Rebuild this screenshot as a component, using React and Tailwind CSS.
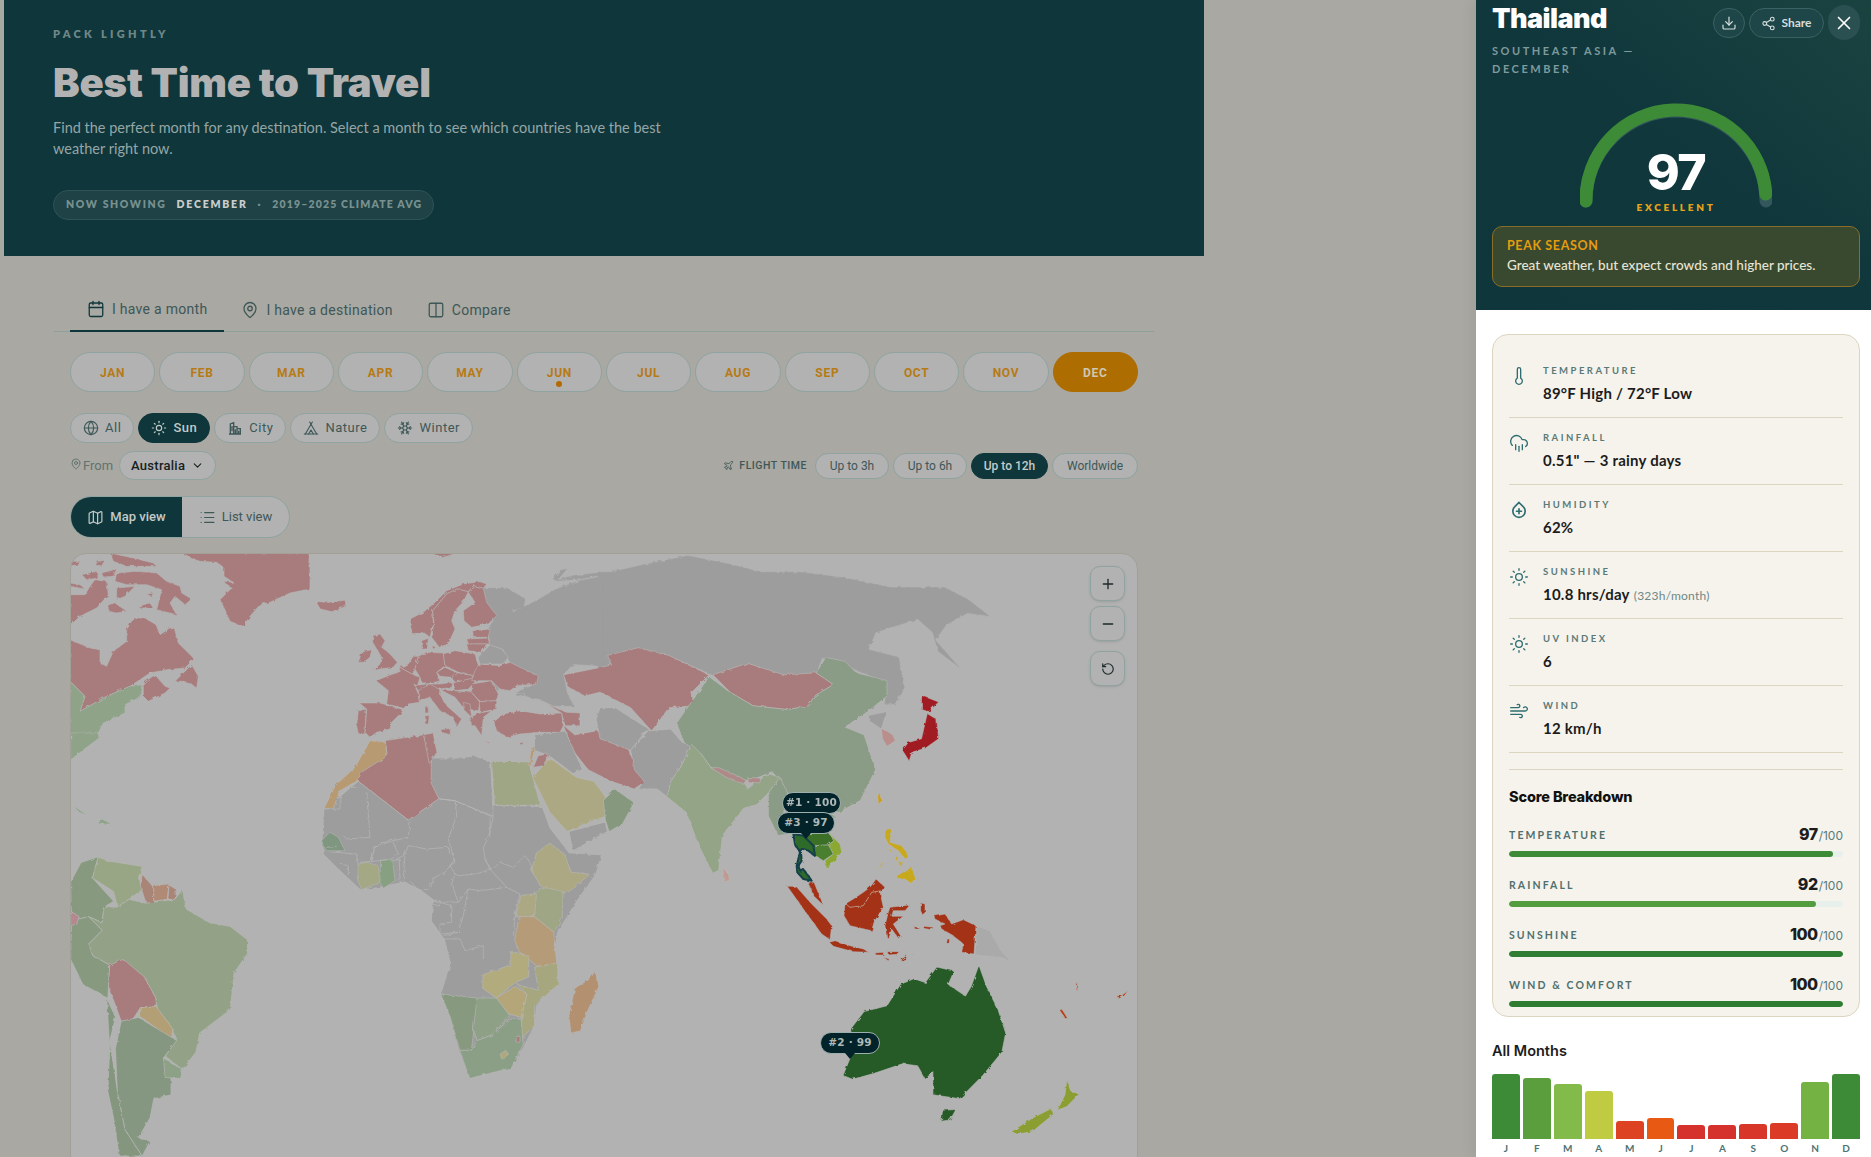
import React from "react";
import {
  Calendar,
  MapPin,
  Columns2,
  Globe,
  Sun,
  Tent,
  Snowflake,
  Map as MapIcon,
  List,
  ChevronDown,
  Plane,
  Download,
  Share2,
  X,
  Thermometer,
  CloudRain,
  Wind,
  Plus,
  Minus,
  RotateCcw,
} from "lucide-react";

const months = ["JAN", "FEB", "MAR", "APR", "MAY", "JUN", "JUL", "AUG", "SEP", "OCT", "NOV", "DEC"];

const CityIcon = ({ className }) => (
  <svg viewBox="0 0 24 24" fill="none" stroke="currentColor" strokeWidth="2" className={className}>
    <path d="M3 21h18M5 21V6l5-2v17M10 10h5v11M15 13h5v8M7.5 9v8M12.5 14v7M17.5 16v5" />
  </svg>
);

const HumidityIcon = ({ className }) => (
  <svg viewBox="0 0 24 24" fill="none" stroke="currentColor" strokeWidth="2" strokeLinecap="round" className={className}>
    <path d="M12 3l5 5a7.4 7.4 0 1 1-10 0z" />
    <path d="M12 10.5v6M9 13.5h6" />
  </svg>
);

const Pill = ({ icon: Icon, label, active }) => (
  <button
    className={`h-[30px] px-[12px] flex items-center gap-[6px] rounded-full border text-[13px] tracking-[0.04em] ${
      active
        ? "bg-[#0f363b] border-[#0f363b] text-[#c2cbc8] font-medium"
        : "bg-[#b2b2b2] border-[#8fa3a0] text-[#3e5757]"
    }`}
  >
    <Icon className="w-[16px] h-[16px]" strokeWidth={1.7} />
    {label}
  </button>
);

const land = "#9d9d9d";
const pink = "#a87c7c";
const indo = "#a33016";
const phil = "#c8a91e";

// traced from the 3x crop at (70,554)
const canadaShapes = [
  [pink, "345,0 720,0 720,108 660,120 600,148 570,155 540,190 520,220 480,205 465,170 450,140 485,105 458,85 490,88 462,70 462,45 440,28 390,25 340,5"],
  [pink, "140,60 200,55 260,60 290,85 330,100 335,120 365,138 345,155 315,130 300,150 320,185 260,170 275,110 230,95 170,95 135,85"],
  [pink, "0,25 30,25 25,35 0,38"],
  [pink, "85,25 105,22 95,38 75,36"],
  [pink, "120,0 190,15 250,30 260,40 170,40 130,25"],
  [pink, "35,65 80,55 85,75 50,80"],
  [pink, "95,60 140,48 130,70 100,72"],
  [pink, "0,90 30,95 45,108 0,100"],
  [pink, "0,125 45,125 60,100 75,80 110,85 115,125 80,165 30,190 0,218"],
  [pink, "140,105 195,100 165,130 140,140"],
  [pink, "115,155 135,150 170,175 140,180 115,175"],
  [pink, "205,160 240,150 250,165 210,165"],
  [pink, "230,125 250,118 245,130"],
  [pink, "0,260 60,285 90,290 90,330 110,340 130,295 170,265 170,230 190,195 225,195 258,215 270,245 300,225 312,222 325,270 365,310 372,318 345,345 290,350 240,360 180,400 110,430 30,475 45,430 0,385"],
  [pink, "220,390 255,365 285,400 300,405 285,420 235,445 220,430"],
  [pink, "315,385 365,335 385,370 380,405 360,390 340,385"],
  ["#8fa389", "0,385 45,430 30,475 110,430 180,400 215,395 215,430 165,455 165,480 100,510 85,540 0,540"],
];

// traced from the 3x crop at (340,570)
const europeShapes = [
  [land, "430,58 500,58 555,90 550,115 515,125 480,90 520,130 590,95 650,60 720,35 790,22 790,290 700,285 670,315 680,370 700,410 640,410 600,390 570,385 530,370 590,345 595,320 540,295 510,280 490,240 450,228 445,180 470,140 440,100", land],
  [land, "640,30 660,5 680,0 650,35", land],
  [land, "650,35 700,20 780,12 780,18 720,30", land],
  [pink, "210,150 250,130 285,100 320,65 370,45 420,38 440,45 430,58 400,50 385,68 350,60 320,75 295,105 278,125 280,165 270,205 250,190 220,198 212,175"],
  [pink, "278,125 295,105 320,75 350,60 385,68 370,98 345,125 335,155 345,180 325,225 298,235 275,205 282,160"],
  [pink, "400,50 430,58 440,100 470,140 445,165 395,175 372,155 370,125 405,100 385,70"],
  [pink, "398,185 450,180 445,205 400,205"],
  [pink, "380,210 445,207 448,225 385,225"],
  [pink, "380,225 440,225 425,250 385,245"],
  [pink, "245,215 265,208 262,240 245,240"],
  [pink, "275,230 290,235 280,240"],
  [pink, "98,200 120,195 135,215 125,235 150,255 172,280 160,295 120,300 100,305 120,285 125,265 110,240 98,220"],
  [pink, "55,280 65,250 95,242 90,265 70,280"],
  [pink, "108,335 150,318 175,310 180,295 222,318 240,325 232,352 222,345 235,375 238,400 205,405 190,418 140,405 145,365"],
  [pink, "180,295 205,285 220,262 235,262 225,300 222,318"],
  [pink, "235,262 260,250 310,252 315,290 290,310 300,335 285,340 245,342 240,325 225,300"],
  [pink, "310,255 345,245 405,255 418,300 400,320 355,310 315,290"],
  [pink, "290,310 315,295 360,315 335,325 300,322"],
  [pink, "225,350 260,345 262,362 235,365"],
  [pink, "260,345 300,345 340,340 335,355 300,360 270,358"],
  [pink, "340,342 400,325 405,340 385,360 345,365"],
  [pink, "335,325 355,312 400,320 395,328 345,340"],
  [pink, "395,345 455,335 475,375 470,395 420,398 395,370"],
  [land, "455,335 470,340 480,370 470,365"],
  [pink, "405,305 418,285 480,290 510,280 540,295 595,320 590,345 530,350 510,365 480,360 455,335 395,335"],
  [land, "415,265 450,228 485,240 505,265 490,285 420,285"],
  [pink, "235,365 270,345 300,362 298,375 320,410 365,450 350,475 340,445 300,425 270,385 238,395"],
  [pink, "255,412 265,412 265,432 255,432"],
  [pink, "255,440 268,440 265,465 255,465"],
  [pink, "302,482 332,478 330,497 305,490"],
  [pink, "300,362 340,365 395,370 420,400 415,425 380,420 365,410 345,385"],
  [pink, "418,398 470,395 470,420 420,430"],
  [pink, "390,445 420,432 455,425 430,445 425,500 405,470 395,470"],
  [pink, "370,400 390,405 395,445 375,425"],
  [pink, "58,402 120,402 175,418 190,425 155,460 150,480 110,490 90,505 75,490 80,420"],
  [pink, "50,470 55,425 78,420 75,490 55,495"],
  [pink, "462,458 490,435 540,425 600,435 665,432 670,470 660,490 600,490 540,495 500,505 470,485"],
  [pink, "620,405 680,430 720,432 720,470 675,470 665,432"],
  [land, "525,375 550,370 555,380 535,385"],
  [pink, "535,522 552,520 545,528"],
  [pink, "435,518 455,520 445,522"],
  ["#b89a72", "575,535 585,535 572,590 566,590"],
  [pink, "595,560 625,555 612,590 580,595"],
];

// traced from the 3x crop at (320,760), the base land comes from the west set
const africaShapes = [
  ["#7f9780", "5,245 30,220 55,235 75,275 20,275 10,260"],
  ["#a4a885", "115,315 140,310 175,320 180,370 125,392 112,360"],
  ["#88a082", "182,303 218,303 225,365 190,388 180,370"],
];

const africaLines = [
  "15,150 60,150 60,115 85,85 115,85",
  "140,100 150,235 80,240 70,230",
  "260,182 270,185 265,235 220,245 160,265 150,310",
  "360,120 405,125 410,170 385,240 405,310 390,320 405,345",
  "265,260 320,270 385,265 390,285",
  "265,260 255,285 250,365",
  "275,370 295,395 325,390 345,355 375,340 405,300",
  "405,125 520,175 505,235 490,265 495,300 510,330 470,345 415,350 405,345",
  "495,300 515,335 540,310 580,325 615,290 630,310 640,340",
  "510,175 510,235",
  "405,345 395,375 415,430",
  "510,330 560,385 480,395 445,390 415,430 340,428",
  "445,390 430,470 415,520 370,530",
  "560,385 600,405 585,470 580,530",
  "150,310 165,265 215,240 235,285 215,300 180,305 120,310",
  "30,280 50,280 110,285 115,320",
  "60,315 85,320 85,350",
  "220,305 238,300 240,365",
  "230,300 260,285",
  "335,425 360,425 360,440 335,440",
  "360,430 395,440 395,490 360,495 360,525 415,520",
  "370,540 420,540 435,575 490,560 490,600",
  "20,265 50,262",
];

// traced from the large crop at (60,550)
const westShapes = [
  [pink, "965,10 1040,10 1000,22"],
  ["#8fa389", "28,345 62,380 50,420 110,395 215,350 205,375 170,400 135,425 105,450 100,490 60,520 28,545"],
  ["#8fa389", "30,660 75,690 50,680"],
  ["#8fa389", "105,695 135,710 100,712"],
  [pink, "668,135 700,138 745,132 748,148 710,162 680,155"],
  [pink, "1315,455 1345,480 1400,470 1470,470 1490,530 1530,600 1500,620 1440,600 1380,570 1340,520"],
  [land, "1240,480 1320,470 1365,570 1340,580 1280,535 1240,520"],
  [land, "690,672 780,600 910,700 990,645 1135,662 1260,665 1280,720 1330,785 1415,790 1400,840 1350,910 1300,990 1290,1050 1300,1120 1245,1180 1240,1230 1210,1290 1180,1340 1070,1368 1040,1290 1020,1210 995,1150 1020,1070 1005,1010 970,960 975,905 940,880 900,860 830,875 785,880 720,820 690,790 685,750"],
  [land, "970,540 1040,540 1085,535 1125,550 1132,690 1030,650 990,645 965,605"],
  [pink, "850,495 950,480 970,550 970,605 990,645 910,700 780,600 775,570 855,535"],
  [pink, "950,480 975,475 985,525 965,555"],
  ["#b89a72", "810,495 850,500 855,535 790,575 775,600 730,625 715,670 690,670 720,610 770,565"],
  ["#9fa685", "1128,548 1225,550 1255,662 1135,662"],
  ["#aca883", "1235,590 1280,540 1350,590 1395,600 1455,680 1385,705 1325,730 1280,680"],
  ["#86997f", "1420,650 1450,620 1500,655 1470,710 1435,730 1425,700"],
  [land, "1330,730 1425,705 1430,730 1340,780"],
  ["#aca883", "1280,760 1320,790 1335,835 1385,840 1330,885 1295,895 1255,870 1232,830 1245,785"],
  ["#9fa685", "1240,885 1270,875 1315,885 1312,955 1290,990 1240,950"],
  ["#aca883", "1205,895 1245,890 1240,950 1190,950"],
  ["#b59b78", "1200,950 1240,950 1290,990 1298,1070 1250,1080 1200,1040 1188,1010"],
  ["#b2ab7d", "1105,1100 1175,1075 1180,1040 1225,1050 1225,1105 1190,1120 1140,1160 1105,1135"],
  ["#a6a77f", "1240,1080 1300,1070 1302,1125 1240,1180 1240,1230 1205,1265 1205,1215 1220,1150 1195,1125 1250,1140"],
  ["#b5a67a", "1140,1160 1190,1130 1220,1150 1205,1210 1170,1200"],
  ["#87997f", "995,1150 1090,1160 1090,1180 1078,1270 1075,1295 1045,1295 1020,1210"],
  ["#8ea085", "1090,1160 1140,1160 1175,1205 1130,1255 1090,1270 1080,1240"],
  ["#8a9f85", "1045,1295 1075,1295 1090,1270 1130,1255 1175,1215 1205,1215 1210,1280 1180,1340 1070,1368"],
  ["#b0a878", "1150,1305 1165,1295 1172,1305 1155,1318"],
  [pink, "1192,1260 1202,1258 1202,1274 1192,1274"],
  ["#b3906f", "1398,1090 1408,1130 1380,1190 1360,1245 1335,1250 1330,1205 1345,1135 1385,1110"],
  ["#879a80", "100,795 85,850 140,910 115,925 110,965 75,950 30,960 28,860 55,810"],
  ["#99a685", "100,795 120,805 215,820 205,850 215,880 180,905 150,925 140,885 85,850"],
  ["#a98578", "215,840 245,875 245,915 225,915 210,870"],
  ["#b08a75", "245,870 285,865 280,905 245,910"],
  ["#a98578", "285,868 305,880 300,905 282,905"],
  ["#93a287", "115,925 150,925 180,905 225,915 300,905 320,880 330,930 390,965 445,975 490,1010 490,1045 455,1095 445,1190 365,1250 355,1300 320,1345 275,1310 305,1265 280,1220 255,1190 250,1160 220,1105 165,1095 130,1075 85,1050 75,1020 110,985 75,950 110,965"],
  ["#879a80", "30,960 75,950 110,985 75,1020 85,1050 130,1075 125,1160 60,1125 28,1060"],
  ["#b5878f", "28,935 50,950 45,965 28,975"],
  [pink, "130,1075 165,1060 220,1105 250,1160 252,1178 210,1185 190,1215 160,1220 127,1130"],
  ["#b39f75", "210,1185 250,1180 295,1240 290,1275 260,1270 255,1240 205,1205"],
  ["#85967f", "122,1160 145,1210 130,1270 150,1400 170,1500 215,1568 155,1568 140,1470 125,1400 130,1290"],
  ["#859780", "160,1220 205,1210 255,1240 305,1270 270,1315 290,1370 290,1410 245,1420 235,1470 205,1520 235,1530 215,1568 170,1500 150,1400 145,1290"],
  ["#8ca185", "270,1315 320,1345 315,1368 275,1365"],
];

// traced from the large crop at (600,550)
const eastShapes = [
  [land, "-5,60 30,60 120,40 230,18 340,40 420,60 520,60 640,75 760,100 900,100 960,130 1015,172 960,165 905,195 875,235 935,302 885,265 870,215 830,180 720,215 700,260 780,280 795,360 770,400 745,400 750,345 640,300 580,280 565,320 480,325 385,295 295,325 180,275 100,255 25,280 30,305 0,310 -5,310", land],
  [pink, "-95,325 30,300 20,275 100,255 180,275 285,325 240,370 245,405 180,410 135,470 80,410 40,390 0,370 -40,380 -85,355"],
  [land, "0,410 40,410 135,470 120,470 80,520 0,490 -10,440"],
  [land, "100,620 115,600 90,570 80,520 125,470 185,465 215,500 240,505 210,565 185,600 175,640 150,620"],
  [pink, "295,325 385,295 480,325 565,320 610,350 560,380 545,405 490,415 400,405 340,370"],
  ["#8a9c86", "200,450 285,330 340,370 400,405 490,415 545,405 560,380 610,350 565,320 590,280 640,290 670,320 750,340 750,380 700,420 640,460 690,480 720,570 680,650 625,680 575,670 490,630 450,575 390,600 290,565 265,530 220,500"],
  ["#93a487", "185,600 210,565 240,505 265,530 290,565 380,605 385,620 440,580 470,590 440,630 410,660 375,670 320,740 310,830 295,838 260,770 225,680 175,640"],
  ["#ad8a88", "290,565 310,565 380,595 380,610 330,590"],
  ["#ad8a88", "385,590 420,592 418,604 388,604"],
  ["#8a9c86", "440,630 470,590 490,630 480,680 500,735 465,740 440,690"],
  ["#8fa389", "480,660 575,670 615,690 590,730 545,735 510,735 500,700"],
  ["#a11f24", "840,378 885,395 860,420 840,415"],
  ["#a11f24", "855,425 880,440 885,490 850,515 815,525 808,548 790,520 805,500 840,490"],
  ["#c9a020", "730,628 738,650 728,660 725,640"],
  [land, "700,430 750,420 735,465 705,445"],
  ["#b98f8e", "735,463 765,480 772,495 750,510 738,490"],
  ["#c09a90", "320,820 335,840 340,855 325,860"],
  ["#255a25", "635,1360 660,1300 655,1240 690,1195 750,1180 785,1125 820,1110 850,1120 880,1080 925,1090 910,1125 955,1155 970,1130 990,1075 1010,1130 1040,1190 1060,1250 1050,1300 1000,1360 940,1420 905,1415 870,1410 870,1350 850,1370 830,1335 790,1330 715,1355 660,1370"],
  ["#255a25", "895,1450 930,1448 915,1475 892,1478"],
  ["#8a9e32", "1220,1370 1230,1400 1252,1408 1220,1440 1195,1450 1215,1410"],
  ["#8a9e32", "1075,1505 1130,1470 1180,1445 1185,1460 1130,1505 1090,1512"],
  ["#b54018", "1200,1190 1208,1190 1222,1212 1215,1213"],
  ["#b54018", "1350,1155 1365,1152 1380,1140 1370,1155 1355,1162"],
  ["#b54018", "1243,1122 1247,1122 1248,1140 1245,1140"],
];

// traced from the 3x crop at (770,830)
const seaShapes = [
  ["#3a6f28", "100,15 175,10 192,35 175,48 130,50 110,30"],
  ["#8aa832", "175,10 210,45 215,70 170,120 165,95 190,75 175,48 192,35"],
  ["#4a7f2d", "130,50 175,48 190,75 160,95 135,80"],
  [indo, "112,158 132,160 160,228 135,205"],
  [indo, "52,172 78,172 125,225 170,270 185,290 180,332 155,315 100,240"],
  [indo, "178,340 195,335 240,350 280,360 298,370 250,368 190,352"],
  [indo, "315,372 340,370 340,378 318,378"],
  [indo, "352,368 388,368 380,376 355,378"],
  [indo, "340,385 358,390 355,395"],
  [indo, "395,390 413,378 405,395 395,397"],
  ["#aaaaaa", "415,378 440,370 430,380"],
  [indo, "318,150 345,175 330,190 340,235 312,280 305,305 240,290 222,260 225,225 250,210 280,190 300,175"],
  [indo, "360,235 420,228 405,245 370,245 365,262 400,262 370,285 392,320 385,328 365,300 358,325 350,325 345,290 355,250"],
  [indo, "452,222 465,225 465,250 458,258 452,245"],
  [indo, "432,293 445,295 445,300 435,300"],
  [indo, "458,292 490,295 485,302 460,298"],
  [indo, "492,262 525,255 545,285 580,272 618,290 612,375 575,370 580,345 550,320 515,300 510,290 525,285 495,270"],
  [indo, "532,330 538,330 538,345 530,342"],
  ["#aaaaaa", "620,290 660,305 690,360 720,395 690,385 615,378"],
  [phil, "345,0 365,0 360,40 395,50 410,70 415,85 405,90 385,65 355,45 345,25"],
  [phil, "355,58 365,65 360,70"],
  [phil, "375,82 385,85 380,98"],
  [phil, "385,95 400,100 390,115"],
  [phil, "380,140 410,125 425,112 435,145 425,165 405,150 382,148"],
  [phil, "322,120 345,92 335,112"],
];

const Shapes = ({ items }) =>
  items.map(([fill, points, stroke], i) => (
    <polygon key={i} points={points} fill={fill} stroke={stroke || "#b8b8b8"} strokeWidth="1.6" strokeLinejoin="round" />
  ));

const Lines = ({ items }) =>
  items.map((points, i) => (
    <polyline key={i} points={points} fill="none" stroke="#b8b8b8" strokeWidth="2" />
  ));

const WorldMap = () => (
  <svg viewBox="0 0 1066 620" className="block w-[1066px] h-[620px]">
    <defs>
      {/* roughens the straight traced edges into a coastline */}
      <filter id="coast" x="0" y="0" width="100%" height="100%" filterUnits="userSpaceOnUse">
        <feTurbulence type="fractalNoise" baseFrequency="0.22" numOctaves="2" seed="4" />
        <feDisplacementMap in="SourceGraphic" scale="3.2" />
      </filter>
    </defs>
    <g filter="url(#coast)">
      <g transform="translate(529,-5) scale(0.3827,0.3871)">
        <Shapes items={eastShapes.slice(0, 1)} />
      </g>
      <g transform="translate(-11,-5) scale(0.3827,0.3871)">
        <Shapes items={westShapes} />
      </g>
      <g transform="translate(-1,-1) scale(0.3333)">
        <Shapes items={canadaShapes} />
      </g>
      <g transform="translate(249,205) scale(0.3333)">
        <Shapes items={africaShapes} />
        <Lines items={africaLines} />
      </g>
      <g transform="translate(269,15) scale(0.3333)">
        <Shapes items={europeShapes} />
      </g>
      <g transform="translate(529,-5) scale(0.3827,0.3871)">
        <Shapes items={eastShapes.slice(1)} />
      </g>
      <g transform="translate(699,275) scale(0.3333)">
        <Shapes items={seaShapes} />
        <polygon
          points="70,15 100,20 110,30 130,50 135,80 115,65 92,58 95,95 85,110 90,125 100,120 125,155 100,150 82,130 80,110 90,70 75,45"
          fill="#2f6a2a"
          stroke="#124048"
          strokeWidth="6"
          strokeLinejoin="round"
        />
        <polyline points="228,225 240,235 280,230 305,190 335,185" fill="none" stroke="#c9c4bb" strokeWidth="2" />
      </g>
    </g>
  </svg>
);

const MapTag = ({ label, className, tail }) => (
  <div
    className={`absolute h-[22px] rounded-full bg-[#03232a] border border-[#9eb0ae] flex items-center justify-center whitespace-nowrap text-[10.5px] font-bold tracking-[0.02em] text-[#aeb9b7] font-['DejaVu_Sans'] ${className}`}
  >
    {label}
    {tail && (
      <span className="absolute left-1/2 -translate-x-1/2 top-[20px] w-0 h-0 border-x-[5px] border-x-transparent border-t-[6px] border-t-[#03232a]" />
    )}
  </div>
);

const ControlBtn = ({ children, className = "" }) => (
  <button
    className={`w-[35px] h-[35px] rounded-[10px] border border-[#8fa3a0] bg-[#b2b2b2] flex items-center justify-center text-[#1c2a2a] shadow-sm ${className}`}
  >
    {children}
  </button>
);

const LeftPane = () => (
  <main className="w-[1476px] shrink-0 pl-[4px] font-['Roboto',sans-serif]">
    <header className="w-[1200px] h-[256px] bg-[#0f363b] pl-[49px] pt-[28px]">
      <div className="text-[11px] leading-[12px] font-extrabold tracking-[0.3em] text-[#6e8787] font-['Lato',sans-serif]">PACK LIGHTLY</div>
      <h1 className="mt-[18px] text-[40px] leading-[50px] font-black tracking-[-0.005em] text-[#b2b2b2] font-['Inter',sans-serif]">
        Best Time to Travel
      </h1>
      <p className="mt-[9px] w-[640px] text-[14.5px] leading-[21px] text-[#96a6a6] font-['Lato',sans-serif]">
        Find the perfect month for any destination. Select a month to see which countries have the best weather right now.
      </p>
      <div className="mt-[31px] w-[381px] h-[30px] rounded-full border border-[#2f5457] bg-[#1e4245] flex items-center pl-[12px] text-[10.5px] font-extrabold tracking-[0.155em] text-[#78908f] whitespace-nowrap font-['Lato',sans-serif]">
        NOW SHOWING
        <span className="ml-[10px] tracking-[0.17em] text-[#c9cdcb]">DECEMBER</span>
        <span className="ml-[10px]">·</span>
        <span className="ml-[10px] tracking-[0.11em]">2019–2025 CLIMATE AVG</span>
      </div>
    </header>

    <div className="w-[1100px] ml-[50px] mt-[34px] h-[42px] flex pl-[16px] border-b border-[#8ea09c] text-[14px] tracking-[0.02em] text-[#3e5757]">
      <button className="h-[42px] pb-[2px] px-[17px] flex items-center gap-[7px] border-b-2 border-[#0f363b]">
        <Calendar className="w-[18px] h-[18px] text-[#0f363b]" strokeWidth={1.7} />I have a month
      </button>
      <button className="h-[42px] pb-[2px] px-[17px] flex items-center gap-[7px]">
        <MapPin className="w-[18px] h-[18px]" strokeWidth={1.7} />I have a destination
      </button>
      <button className="h-[42px] pb-[2px] px-[17px] flex items-center gap-[7px]">
        <Columns2 className="w-[18px] h-[18px]" strokeWidth={1.7} />Compare
      </button>
    </div>

    <div className="w-[1068px] ml-[66px]">
      <div className="mt-[20px] grid grid-cols-12 gap-[4px]">
        {months.map((m) => (
          <button
            key={m}
            className={`relative h-[40px] pt-[1px] rounded-full border text-[12px] font-bold tracking-[0.06em] ${
              m === "DEC"
                ? "bg-[#ad6d00] border-[#ad6d00] text-[#cfc7b2]"
                : "bg-[#b2b2b2] border-[#8fa3a0] text-[#b77a14]"
            }`}
          >
            {m}
            {m === "JUN" && (
              <span className="absolute left-1/2 -translate-x-1/2 bottom-[4px] w-[6px] h-[6px] rounded-full bg-[#b56a00]" />
            )}
          </button>
        ))}
      </div>

      <div className="mt-[21px] flex gap-[4px]">
        <Pill icon={Globe} label="All" />
        <Pill icon={Sun} label="Sun" active />
        <Pill icon={CityIcon} label="City" />
        <Pill icon={Tent} label="Nature" />
        <Pill icon={Snowflake} label="Winter" />
      </div>

      <div className="mt-[8px] flex items-center justify-between h-[29px]">
        <div className="flex items-center">
          <MapPin className="w-[12px] h-[12px] -mt-[3px] text-[#566a68]" strokeWidth={1.6} />
          <span className="ml-[1px] text-[13px] text-[#62736f]">From</span>
          <button className="ml-[6px] w-[97px] h-[29px] rounded-full border border-[#8fa3a0] bg-[#b2b2b2] flex items-center justify-center gap-[6px] text-[13px] font-medium tracking-[0.02em] text-[#16211f]">
            Australia
            <ChevronDown className="w-[13px] h-[13px]" strokeWidth={2} />
          </button>
        </div>
        <div className="flex items-center gap-[4px]">
          <Plane className="w-[11px] h-[11px] text-[#3e5757] mr-[1px]" strokeWidth={1.8} />
          <span className="mr-[4px] text-[10.5px] font-medium tracking-[0.05em] text-[#3e5757]">FLIGHT TIME</span>
          {[
            ["Up to 3h", "w-[74px]"],
            ["Up to 6h", "w-[74px]"],
            ["Up to 12h", "w-[77px]"],
            ["Worldwide", "w-[86px]"],
          ].map(([t, w]) => (
            <button
              key={t}
              className={`${w} h-[26px] rounded-full border text-[12px] ${
                t === "Up to 12h"
                  ? "bg-[#0f363b] border-[#0f363b] text-[#c2cbc8] font-medium"
                  : "bg-[#b2b2b2] border-[#8fa3a0] text-[#3e5757]"
              }`}
            >
              {t}
            </button>
          ))}
        </div>
      </div>

      <div className="mt-[16px] w-[220px] h-[42px] rounded-full border border-[#8fa3a0] bg-[#b2b2b2] flex overflow-hidden text-[13px]">
        <button className="w-[111px] bg-[#0f363b] text-[#c2cbc8] font-medium flex items-center justify-center gap-[6px]">
          <MapIcon className="w-[17px] h-[17px]" strokeWidth={1.7} />
          Map view
        </button>
        <button className="flex-1 text-[#3e5757] flex items-center justify-center gap-[6px]">
          <List className="w-[17px] h-[17px]" strokeWidth={1.7} />
          List view
        </button>
      </div>

      <div className="relative mt-[15px] w-[1068px] h-[620px] rounded-[16px] border border-[#a19f96] bg-[#b2b2b2] overflow-hidden">
        <WorldMap />
        <div className="absolute top-[12px] right-[12px] flex flex-col gap-[5px]">
          <ControlBtn><Plus className="w-[16px] h-[16px]" /></ControlBtn>
          <ControlBtn><Minus className="w-[16px] h-[16px]" /></ControlBtn>
          <ControlBtn className="mt-[5px]"><RotateCcw className="w-[14px] h-[14px]" /></ControlBtn>
        </div>
        <MapTag label="#1 · 100" className="left-[711px] top-[238px] w-[59px]" />
        <MapTag label="#3 · 97" className="left-[706px] top-[258px] w-[58px]" tail />
        <MapTag label="#2 · 99" className="left-[749px] top-[478px] w-[60px]" tail />
      </div>
    </div>
  </main>
);

const climate = [
  [Thermometer, "TEMPERATURE", "89°F High / 72°F Low"],
  [CloudRain, "RAINFALL", '0.51" — 3 rainy days'],
  [HumidityIcon, "HUMIDITY", "62%"],
  [Sun, "SUNSHINE", "10.8 hrs/day", "(323h/month)"],
  [Sun, "UV INDEX", "6"],
  [Wind, "WIND", "12 km/h"],
];

const scores = [
  ["TEMPERATURE", 97, "bg-[#3d8b37]", "w-[97%]"],
  ["RAINFALL", 92, "bg-[#549d3e]", "w-[92%]"],
  ["SUNSHINE", 100, "bg-[#2e7d32]", "w-full"],
  ["WIND & COMFORT", 100, "bg-[#2e7d32]", "w-full"],
];

const yearBars = [
  ["J", "h-[65px] bg-[#3d8b37]"],
  ["F", "h-[61px] bg-[#5a9e3e]"],
  ["M", "h-[55px] bg-[#82bb4a]"],
  ["A", "h-[48px] bg-[#bfcc42]"],
  ["M", "h-[18px] bg-[#dd4322]"],
  ["J", "h-[21px] bg-[#e85a14]"],
  ["J", "h-[14px] bg-[#d6322d]"],
  ["A", "h-[14px] bg-[#d6322d]"],
  ["S", "h-[15px] bg-[#d83628]"],
  ["O", "h-[16px] bg-[#da3a26]"],
  ["N", "h-[57px] bg-[#74b244]"],
  ["D", "h-[65px] bg-[#3d8b37]"],
];

const DetailPanel = () => (
  <aside className="w-[395px] shrink-0 h-[1157px] bg-white overflow-hidden font-['Lato',sans-serif] shadow-[-4px_0_12px_rgba(0,0,0,0.06)]">
    <div className="h-[310px] pl-[16px] pr-[11px] bg-gradient-to-tr from-[#0f363b] via-[#0f373c] to-[#1a4340]">
      <div className="flex justify-between">
        <div className="w-[170px]">
          <h2 className="mt-[2px] text-[27px] leading-[34px] font-black tracking-[-0.02em] text-white font-['Inter',sans-serif]">Thailand</h2>
          <p className="mt-[6px] text-[11px] leading-[18px] font-bold tracking-[0.23em] text-[#7f9a9c]">SOUTHEAST ASIA — DECEMBER</p>
        </div>
        <div className="flex gap-[4px] pt-[5px] h-[40px]">
          <button className="w-[32px] h-[30px] mt-[3px] rounded-full border border-[#3b6063] bg-[#1e4649] flex items-center justify-center text-[#d5dedc]">
            <Download className="w-[16px] h-[16px]" strokeWidth={1.8} />
          </button>
          <button className="w-[75px] h-[30px] mt-[3px] rounded-full border border-[#3b6063] bg-[#1e4649] flex items-center justify-center gap-[5px] text-[12px] font-bold text-[#d5dedc]">
            <Share2 className="w-[15px] h-[15px]" strokeWidth={1.8} />
            Share
          </button>
          <button className="w-[32px] h-[35px] rounded-full bg-[#2a5052] flex items-center justify-center text-white">
            <X className="w-[22px] h-[22px]" strokeWidth={1.8} />
          </button>
        </div>
      </div>

      <div className="relative mt-[23px] mx-auto w-[192px] h-[107px]">
        <svg viewBox="0 0 192 107" className="block w-[192px] h-[107px]" fill="none" strokeWidth="13" strokeLinecap="round">
          <path d="M6 100 A90 90 0 0 1 186 100" stroke="#33575c" />
          <path d="M6 100 A90 90 0 0 1 185.8 93" stroke="#3d8b37" />
        </svg>
        <div className="absolute inset-x-0 top-[43px] text-center text-[50px] leading-[56px] font-extrabold text-white font-['Inter',sans-serif] tracking-[-0.03em]">97</div>
        <div className="absolute inset-x-0 top-[99px] text-center text-[10px] leading-[14px] font-extrabold tracking-[0.27em] text-[#e8a317]">EXCELLENT</div>
      </div>

      <div className="mt-[18px] h-[61px] rounded-[10px] border border-[#8a6d28] bg-[#38492f] pl-[14px] pt-[11px]">
        <div className="text-[12.5px] leading-[16px] font-bold tracking-[0.05em] text-[#e59d10]">PEAK SEASON</div>
        <div className="mt-[2px] text-[13.5px] leading-[18px] font-medium text-[#e8e4d4]">Great weather, but expect crowds and higher prices.</div>
      </div>
    </div>

    <div className="ml-[16px] w-[368px] mt-[24px] h-[683px] rounded-[16px] border border-[#dcd5c0] bg-[#f6f3ec] px-[16px] pt-[16px]">
      {climate.map(([Icon, label, value, note]) => (
        <div key={label} className="h-[67px] flex gap-[14px] pt-[14px] border-b border-[#dcd5c0]">
          <Icon className="w-[20px] h-[20px] mt-[1px] text-[#2e6d70]" strokeWidth={1.6} />
          <div>
            <div className="text-[9.5px] leading-[12px] font-bold tracking-[0.26em] text-[#5a7a78]">{label}</div>
            <div className="mt-[5px] text-[15px] leading-[22px] font-bold tracking-[0.015em] text-[#1c1c1c]">
              {value}
              {note && <span className="ml-[4px] text-[12px] font-normal text-[#6d8886]">{note}</span>}
            </div>
          </div>
        </div>
      ))}
      <div className="mt-[16px] border-t border-[#dcd5c0] pt-[17px] text-[14.5px] leading-[20px] font-extrabold text-[#111] font-['Inter',sans-serif] tracking-[-0.01em]">
        Score Breakdown
      </div>
      <div className="mt-[16px]">
        {scores.map(([label, score, bar, width]) => (
          <div key={label} className="h-[50px]">
            <div className="h-[22px] flex items-center justify-between">
              <span className="pt-[3px] text-[10.5px] font-bold tracking-[0.2em] text-[#4f706e]">{label}</span>
              <span className="text-[16px] font-extrabold text-[#1c1c1c] font-['Inter',sans-serif] tracking-[-0.03em]">
                {score}
                <span className="ml-[1px] text-[12px] font-normal tracking-normal text-[#5a7a78]">/100</span>
              </span>
            </div>
            <div className="mt-[6px] h-[6px] rounded-full bg-[#e8f0ec] overflow-hidden">
              <div className={`h-full rounded-full ${bar} ${width}`} />
            </div>
          </div>
        ))}
      </div>
    </div>

    <div className="mx-[16px] mt-[24px] text-[14.5px] leading-[20px] font-semibold text-[#1c1c1c] font-['Inter',sans-serif]">All Months</div>
    <div className="ml-[16px] w-[368px] mt-[13px] grid grid-cols-12 gap-[3px]">
      {yearBars.map(([m, bar], i) => (
        <div key={i} className="flex flex-col items-stretch">
          <div className="h-[65px] flex items-end">
            <div className={`w-full rounded-t-[3px] ${bar}`} />
          </div>
          <div className="mt-[3px] text-center text-[10px] leading-[12px] font-bold text-[#4d7475]">{m}</div>
        </div>
      ))}
    </div>
  </aside>
);

export default function App() {
  return (
    <div className="w-[1871px] h-[1157px] flex overflow-hidden bg-[#a9a8a2]">
      <LeftPane />
      <DetailPanel />
    </div>
  );
}
